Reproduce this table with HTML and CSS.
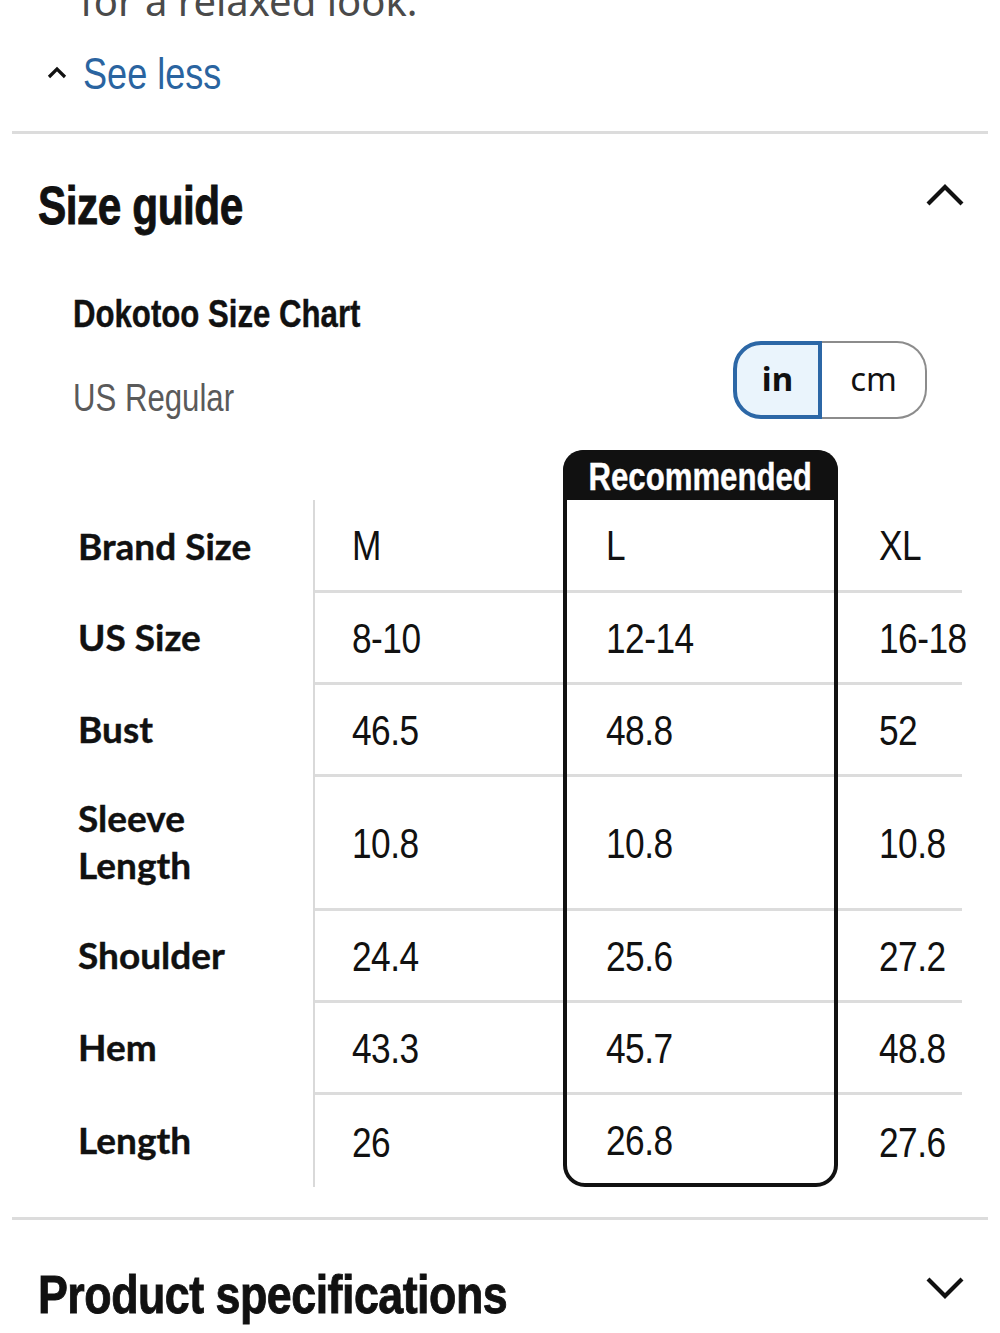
FILE: index.html
```html
<!DOCTYPE html>
<html lang="en">
<head>
<meta charset="utf-8">
<title>Size guide</title>
<link rel="stylesheet" href="styles.css">
</head>
<body>
<div class="page">
  <p class="desc-tail">for a relaxed look.</p>
  <button class="see-less" type="button">
    <svg class="see-less-icon" width="20" height="14" viewBox="0 0 20 14"><polyline points="2,12 10,4 18,12" fill="none" stroke="#111" stroke-width="3.2"/></svg>
    <span class="nar">See less</span>
  </button>
  <div class="divider"></div>

  <section class="accordion">
    <div class="acc-head">
      <h2 class="acc-title"><span class="nar">Size guide</span></h2>
      <svg class="chev" width="38" height="24" viewBox="0 0 38 24"><polyline points="2,21 19,4 36,21" fill="none" stroke="#111" stroke-width="4.2"/></svg>
    </div>
    <div class="acc-body">
      <h3 class="chart-title"><span class="nar">Dokotoo Size Chart</span></h3>
      <div class="chart-meta">
        <span class="fit"><span class="nar">US Regular</span></span>
        <div class="unit-toggle">
          <span class="unit unit-active">in</span>
          <span class="unit unit-off">cm</span>
        </div>
      </div>
      <div class="table-scroll">
        <div class="size-grid">
          <div class="rec-box"></div>
          <div class="rec-head"><span class="nar nar-c">Recommended</span></div>

          <div class="lab r2">Brand Size</div>
          <div class="val c2 r2 first"><span class="nar">M</span></div>
          <div class="val c3 r2 first"><span class="nar">L</span></div>
          <div class="val c4 r2 first"><span class="nar">XL</span></div>

          <div class="lab r3">US Size</div>
          <div class="val c2 r3"><span class="nar">8-10</span></div>
          <div class="val c3 r3"><span class="nar">12-14</span></div>
          <div class="val c4 r3"><span class="nar">16-18</span></div>

          <div class="lab r4">Bust</div>
          <div class="val c2 r4"><span class="nar">46.5</span></div>
          <div class="val c3 r4"><span class="nar">48.8</span></div>
          <div class="val c4 r4"><span class="nar">52</span></div>

          <div class="lab r5">Sleeve<br>Length</div>
          <div class="val c2 r5"><span class="nar">10.8</span></div>
          <div class="val c3 r5"><span class="nar">10.8</span></div>
          <div class="val c4 r5"><span class="nar">10.8</span></div>

          <div class="lab r6">Shoulder</div>
          <div class="val c2 r6"><span class="nar">24.4</span></div>
          <div class="val c3 r6"><span class="nar">25.6</span></div>
          <div class="val c4 r6"><span class="nar">27.2</span></div>

          <div class="lab r7">Hem</div>
          <div class="val c2 r7"><span class="nar">43.3</span></div>
          <div class="val c3 r7"><span class="nar">45.7</span></div>
          <div class="val c4 r7"><span class="nar">48.8</span></div>

          <div class="lab r8">Length</div>
          <div class="val c2 r8"><span class="nar">26</span></div>
          <div class="val c3 r8 up"><span class="nar">26.8</span></div>
          <div class="val c4 r8"><span class="nar">27.6</span></div>
        </div>
      </div>
    </div>
  </section>

  <div class="divider divider-low"></div>

  <div class="acc-head acc-head-spec">
    <h2 class="acc-title"><span class="nar">Product specifications</span></h2>
    <svg class="chev" width="38" height="24" viewBox="0 0 38 24"><polyline points="2,3 19,20 36,3" fill="none" stroke="#111" stroke-width="4.2"/></svg>
  </div>
</div>
</body>
</html>
```

FILE: styles.css
```css
* { box-sizing: border-box; }

html, body {
  margin: 0;
  padding: 0;
  background: #fff;
}

body {
  font-family: "Liberation Sans", Arial, sans-serif;
  color: #111;
  overflow: hidden;
}

.page {
  width: 1000px;
  height: 1333px;
  overflow: hidden;
}

/* condensed rendering of the app's narrow typeface */
.nar {
  display: inline-block;
  white-space: nowrap;
  transform: scaleX(0.82);
  transform-origin: left center;
}

.nar-c { transform-origin: center center; }

.desc-tail {
  margin: -25px 0 0 80px;
  font-family: "Noto Sans", "Open Sans", sans-serif;
  font-size: 40px;
  line-height: 52px;
  color: #4a4a4a;
}

.see-less {
  display: flex;
  align-items: center;
  gap: 16px;
  margin: 24px 0 0 47px;
  padding: 0;
  border: 0;
  background: none;
  font-family: "Liberation Sans", Arial, sans-serif;
  font-size: 44px;
  line-height: 46px;
  color: #2a64a0;
  cursor: pointer;
}

.see-less-icon { margin-top: -4px; }

.divider {
  height: 3px;
  margin: 34px 12px 0;
  background: #dcdcdc;
}

.divider-low { margin-top: 30px; }

.acc-head {
  display: flex;
  justify-content: space-between;
  align-items: center;
  padding: 0 36px 0 38px;
  margin-top: 42px;
  height: 60px;
}

.acc-title {
  margin: 0;
  font-weight: 700;
  font-size: 53px;
  line-height: 60px;
  letter-spacing: -0.6px;
  color: #111;
  -webkit-text-stroke: 0.9px #111;
}

.acc-title .nar { transform: scaleX(0.8); }

.acc-head .chev { margin-top: -22px; }

.acc-head-spec { margin-top: 45px; }
.acc-head-spec .acc-title .nar { transform: scaleX(0.845); }
.acc-head-spec .chev { margin-top: -14px; }

.acc-body {
  padding: 0 0 0 62px;
}

.chart-title {
  margin: 58px 0 0 11px;
  font-weight: 700;
  font-size: 38px;
  line-height: 40px;
  -webkit-text-stroke: 0.4px #111;
}

.chart-meta {
  display: flex;
  justify-content: space-between;
  align-items: flex-end;
  margin-top: 7px;
  padding: 0 73px 0 11px;
}

.fit {
  font-size: 38px;
  line-height: 40px;
  color: #5a5a5a;
  padding-bottom: 1px;
}

.unit-toggle {
  display: flex;
  height: 78px;
  width: 194px;
}

.unit {
  display: flex;
  align-items: center;
  justify-content: center;
  font-family: "Noto Sans", "Open Sans", sans-serif;
  font-size: 33px;
}

.unit-active {
  width: 89px;
  border: 4px solid #2c67a6;
  border-radius: 28px 0 0 28px;
  background: #eaf4fc;
  font-weight: 700;
  color: #111;
  padding-bottom: 4px;
}

.unit-off {
  flex: 1;
  border: 2px solid #8c8c8c;
  border-left: 0;
  border-radius: 0 30px 30px 0;
  color: #111;
  padding-bottom: 4px;
}

.table-scroll {
  margin-top: 31px;
  width: 900px;
}

.size-grid {
  display: grid;
  grid-template-columns: 253px 248px 275px 124px;
  grid-template-rows: 50px 90px 92px 92px 134px 92px 92px 95px;
}

.rec-box {
  grid-column: 3;
  grid-row: 1 / span 8;
  border: 4px solid #111;
  border-radius: 22px;
  z-index: 2;
}

.rec-head {
  grid-column: 3;
  grid-row: 1;
  background: #111;
  border-radius: 20px 20px 0 0;
  color: #fff;
  font-weight: 700;
  font-size: 38px;
  -webkit-text-stroke: 0.4px #fff;
  display: flex;
  align-items: center;
  justify-content: center;
  padding-top: 4px;
  z-index: 3;
}

.lab {
  grid-column: 1;
  display: flex;
  align-items: center;
  padding-left: 16px;
  border-right: 2px solid #d9d9d9;
  font-family: "Lato", "Liberation Sans", sans-serif;
  font-weight: 700;
  font-size: 37px;
  line-height: 47px;
  color: #111;
  -webkit-text-stroke: 0.4px #111;
}

.val {
  display: flex;
  align-items: center;
  border-top: 3px solid #dcdcdc;
  font-size: 43px;
  letter-spacing: -0.6px;
  color: #111;
  padding-top: 2px;
  min-width: 0;
}

.val.first { border-top: 0; padding-top: 0; }

.c2 { grid-column: 2; padding-left: 37px; }
.c3 { grid-column: 3; padding-left: 43px; }
.c4 { grid-column: 4; padding-left: 41px; }

.r2 { grid-row: 2; }
.r3 { grid-row: 3; }
.r4 { grid-row: 4; }
.r5 { grid-row: 5; }
.r6 { grid-row: 6; }
.r7 { grid-row: 7; }
.r8 { grid-row: 8; }

.val.up { padding-bottom: 4px; }
```
